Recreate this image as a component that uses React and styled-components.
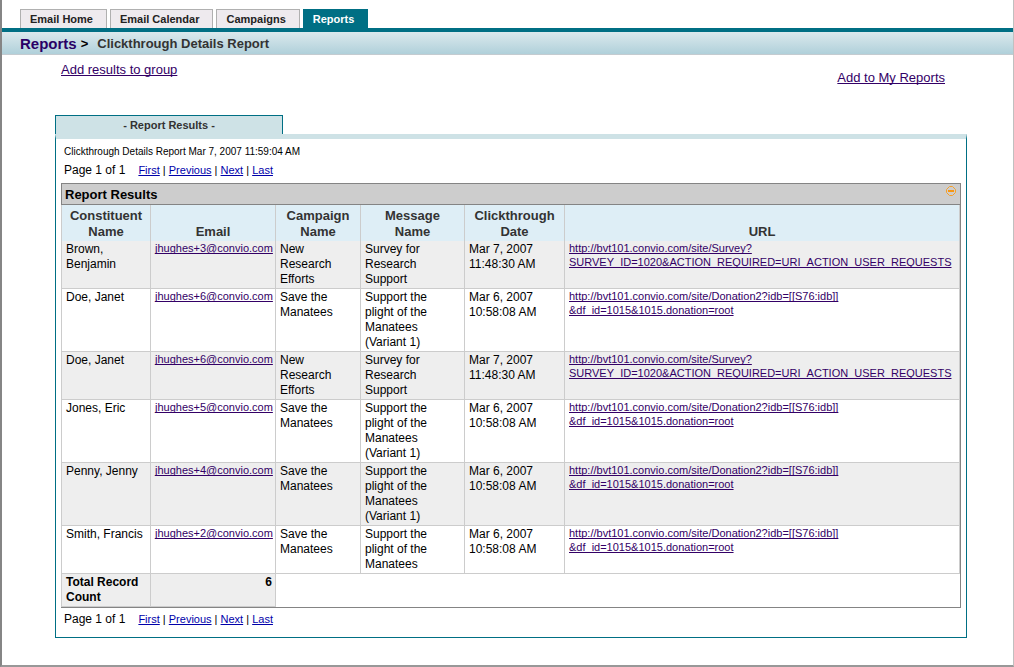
import React from "react"
import styled, { createGlobalStyle } from "styled-components"

const pages = ["Email Home", "Email Calendar", "Campaigns", "Reports"]

const columns = [
  { title: "Constituent Name" },
  { title: "Email" },
  { title: "Campaign Name" },
  { title: "Message Name", wide: true },
  { title: "Clickthrough Date" },
  { title: "URL" },
]

const survey = {
  campaign: "New Research Efforts",
  message: "Survey for Research Support",
  date: "Mar 7, 2007",
  time: "11:48:30 AM",
  url: [
    "http://bvt101.convio.com/site/Survey?",
    "SURVEY_ID=1020&ACTION_REQUIRED=URI_ACTION_USER_REQUESTS",
  ],
}

const donation = {
  campaign: "Save the Manatees",
  message: "Support the plight of the Manatees (Variant 1)",
  date: "Mar 6, 2007",
  time: "10:58:08 AM",
  url: [
    "http://bvt101.convio.com/site/Donation2?idb=[[S76:idb]]",
    "&df_id=1015&1015.donation=root",
  ],
}

const records = [
  { ...survey, name: "Brown, Benjamin", email: "jhughes+3@convio.com" },
  { ...donation, name: "Doe, Janet", email: "jhughes+6@convio.com" },
  { ...survey, name: "Doe, Janet", email: "jhughes+6@convio.com" },
  { ...donation, name: "Jones, Eric", email: "jhughes+5@convio.com" },
  { ...donation, name: "Penny, Jenny", email: "jhughes+4@convio.com" },
  {
    ...donation,
    name: "Smith, Francis",
    email: "jhughes+2@convio.com",
    message: "Support the plight of the Manatees",
  },
]

const Pager = () => (
  <PagerRow aria-label="Result pages">
    <PageCount>Page 1 of 1</PageCount>
    <PageLink href="#first">First</PageLink> |{" "}
    <PageLink href="#previous">Previous</PageLink> |{" "}
    <PageLink href="#next">Next</PageLink> |{" "}
    <PageLink href="#last">Last</PageLink>
  </PagerRow>
)

const App = () => (
  <Page>
    <GlobalStyle />
    <Tabs>
      {pages.map(page => (
        <Tab key={page} href="#" $active={page === "Reports"}>
          {page}
        </Tab>
      ))}
    </Tabs>
    <Breadcrumb>
      <CrumbLink href="#reports">Reports</CrumbLink>
      <CrumbArrow>&gt;</CrumbArrow>
      <CrumbTitle>Clickthrough Details Report</CrumbTitle>
    </Breadcrumb>

    <Actions>
      <ActionLink href="#group">Add results to group</ActionLink>
      <ActionLink href="#my-reports" $low>
        Add to My Reports
      </ActionLink>
    </Actions>

    <Panel>
      <PanelTab>- Report Results -</PanelTab>
      <PanelBody>
        <Caption>Clickthrough Details Report Mar 7, 2007 11:59:04 AM</Caption>
        <Pager />
        <Results>
          <ResultsTitle>
            <h2>Report Results</h2>
            <Collapse type="button" aria-label="Collapse">
              <svg width="10" height="10" viewBox="0 0 10 10">
                <path
                  d="M3.5 0.5h3l3 3v3l-3 3h-3l-3 -3v-3z"
                  fill="none"
                  stroke="#f5a02c"
                />
                <path d="M2 4h6v2h-6z" fill="#f79613" />
              </svg>
            </Collapse>
          </ResultsTitle>
          <Table>
            <colgroup>
              <Col $width={89} />
              <Col $width={125} />
              <Col $width={85} />
              <Col $width={104} />
              <Col $width={100} />
              <Col />
            </colgroup>
            <thead>
              <tr>
                {columns.map(column => (
                  <HeadCell key={column.title} scope="col" $wide={column.wide}>
                    {column.title}
                  </HeadCell>
                ))}
              </tr>
            </thead>
            <tbody>
              {records.map((record, i) => (
                <Row key={i} $shaded={i % 2 === 0}>
                  <Cell>{record.name}</Cell>
                  <LinkCell>
                    <a href={`mailto:${record.email}`}>{record.email}</a>
                  </LinkCell>
                  <Cell>{record.campaign}</Cell>
                  <Cell $wide>{record.message}</Cell>
                  <Cell>
                    {record.date}
                    <br />
                    {record.time}
                  </Cell>
                  <LinkCell>
                    <a href="#url">
                      {record.url[0]}
                      <br />
                      {record.url[1]}
                    </a>
                  </LinkCell>
                </Row>
              ))}
            </tbody>
            <tfoot>
              <tr>
                <TotalCell>Total Record Count</TotalCell>
                <TotalCell $right>{records.length}</TotalCell>
                <td colSpan="4" />
              </tr>
            </tfoot>
          </Table>
        </Results>
        <Pager />
      </PanelBody>
    </Panel>
  </Page>
)

export default App

const GlobalStyle = createGlobalStyle`
  * {
    box-sizing: border-box;
  }

  body {
    margin: 0;
    background: #fff;
    color: #000;
    font-family: "Liberation Sans", Arial, sans-serif;
    font-size: 12px;
  }

  a {
    text-decoration-skip-ink: none;
  }
`

const Page = styled.div`
  min-height: 100vh;
  border-left: 2px solid #858585;
  border-right: 1px solid #c0c0c0;
  border-bottom: 2px solid #989898;
`

const Tabs = styled.nav`
  display: flex;
  gap: 3px;
  padding: 9px 18px 0;
  border-bottom: 4px solid #006f84;
`

const Tab = styled.a`
  height: 19px;
  padding: 0 13px 0 9px;
  border: 1px solid ${props => (props.$active ? "#006f84" : "#b0b0b0")};
  border-bottom: 0;
  background: ${props => (props.$active ? "#006f84" : "#eeeaee")};
  color: ${props => (props.$active ? "#fff" : "#222")};
  font-size: 11px;
  font-weight: bold;
  line-height: 19px;
  text-decoration: none;
`

const Breadcrumb = styled.div`
  display: flex;
  align-items: center;
  height: 23px;
  padding: 0 18px;
  border-bottom: 1px solid #c4cbd0;
  background: linear-gradient(#dbe9ed, #b0d0da);
  font-weight: bold;
`

const CrumbLink = styled.a`
  color: #2a0066;
  font-size: 15px;
  text-decoration: none;
`

const CrumbArrow = styled.span`
  margin: 0 9px 0 4px;
  font-size: 13px;
`

const CrumbTitle = styled.h1`
  margin: 0;
  color: #333;
  font-size: 13px;
`

const Actions = styled.div`
  display: flex;
  justify-content: space-between;
  align-items: flex-start;
  height: 60px;
  padding: 7px 68px 0 59px;
`

const ActionLink = styled.a`
  margin-top: ${props => (props.$low ? "8px" : "0")};
  color: #330066;
  font-size: 13px;
  line-height: 16px;
`

const Panel = styled.section`
  margin: 0 46px 27px 53px;
`

const PanelTab = styled.div`
  width: 228px;
  height: 19px;
  border: 1px solid #006f84;
  border-bottom: 0;
  background: #cee2e6;
  color: #333;
  font-size: 11px;
  font-weight: bold;
  line-height: 19px;
  text-align: center;
`

const PanelBody = styled.div`
  padding: 0 5px 10px;
  border: 1px solid #006f84;
  border-top: 5px solid #cee2e6;
`

const Caption = styled.div`
  padding: 7px 3px 4px;
  font-size: 10px;
  line-height: 12px;
`

const PagerRow = styled.nav`
  padding: 0 3px;
  font-size: 11px;
  line-height: 16px;
`

const PageCount = styled.span`
  margin-right: 13px;
  font-size: 12px;
`

const PageLink = styled.a`
  color: #0000aa;
`

const Results = styled.div`
  margin: 5px 0 3px;
  border-right: 1px solid #848484;
  border-bottom: 1px solid #848484;
`

const ResultsTitle = styled.div`
  display: flex;
  justify-content: space-between;
  align-items: flex-start;
  height: 22px;
  padding: 0 4px 0 3px;
  border: 1px solid #848484;
  border-right: 0;
  background: #cdcdcd;

  h2 {
    margin: 0;
    font-size: 13px;
    line-height: 21px;
  }
`

const Collapse = styled.button`
  display: flex;
  padding: 2px 0;
  border: 0;
  background: none;
`

const Table = styled.table`
  width: 100%;
  border-left: 1px solid #ccc;
  border-spacing: 0;
  table-layout: fixed;
`

const Col = styled.col`
  width: ${props => (props.$width ? `${props.$width}px` : "auto")};
`

const HeadCell = styled.th`
  padding: 3px ${props => (props.$wide ? "16px" : "4px")} 1px;
  border-right: 1px solid #ccc;
  background: #deeef6;
  color: #333;
  font-size: 13px;
  line-height: 16px;
  vertical-align: bottom;
`

const Row = styled.tr`
  background: ${props => (props.$shaded ? "#eee" : "#fff")};
`

const Cell = styled.td`
  padding: 1px ${props => (props.$wide ? "16px" : "3px")} 1px 4px;
  border-right: 1px solid #ccc;
  border-bottom: 1px solid #ccc;
  line-height: 15px;
  vertical-align: top;
`

const LinkCell = styled(Cell)`
  padding-top: 0;
  font-size: 11px;
  line-height: 14px;

  a {
    color: #330066;
  }
`

const TotalCell = styled(Cell)`
  background: #eee;
  font-weight: bold;
  text-align: ${props => (props.$right ? "right" : "left")};
`
